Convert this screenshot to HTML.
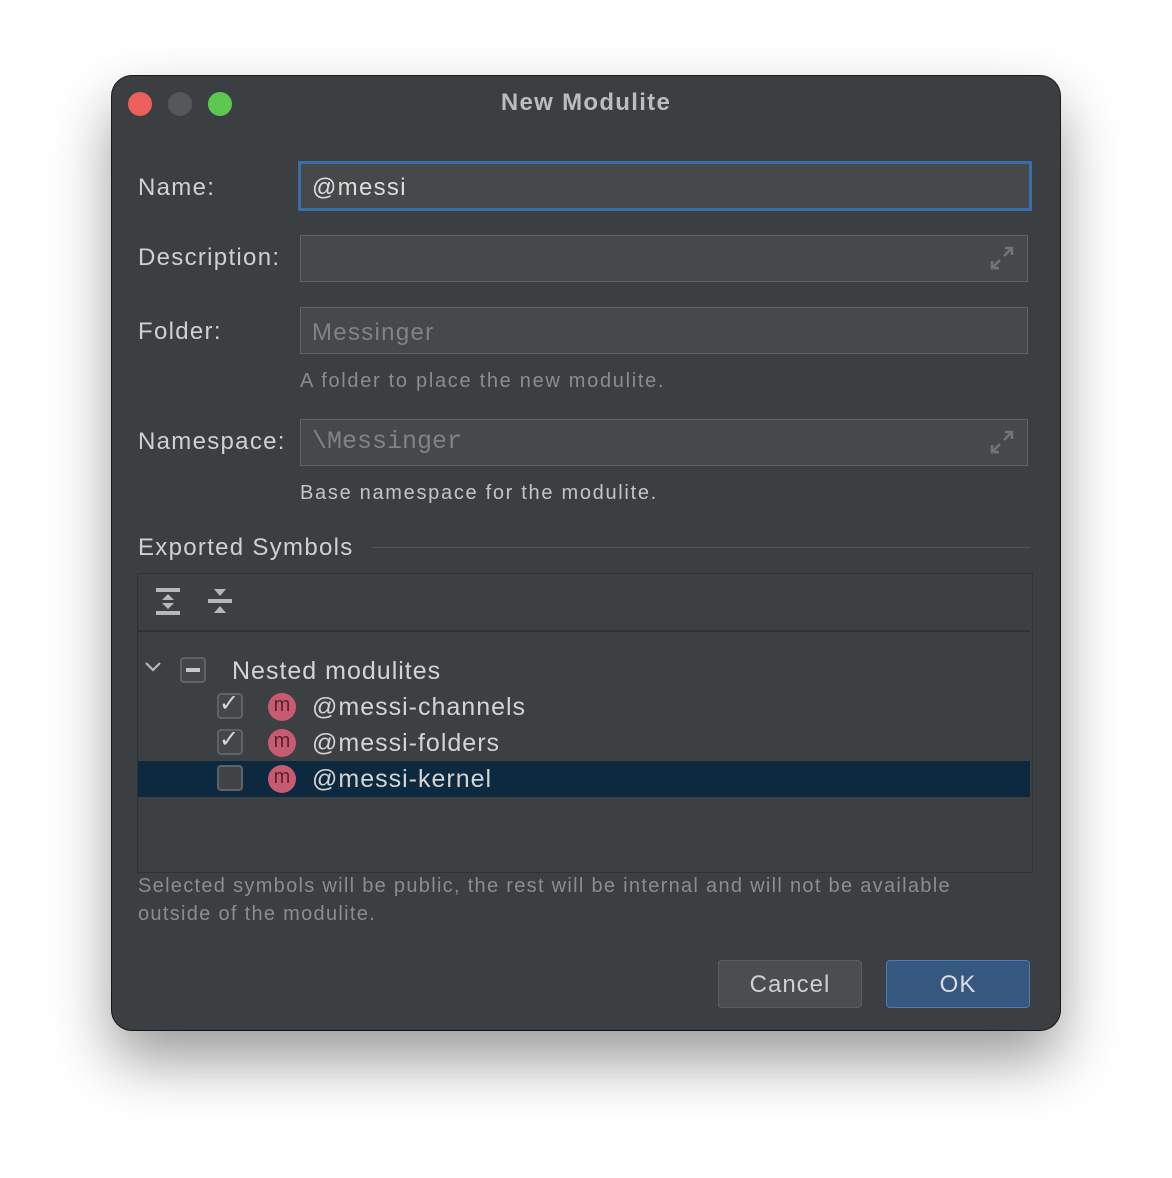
<!DOCTYPE html>
<html><head><style>
body{margin:0;width:1172px;height:1178px;background:#fff;font-family:"Liberation Sans",sans-serif;position:relative;overflow:hidden}
.win{position:absolute;left:112px;top:76px;width:948px;height:954px;background:#3c3f41;border-radius:20px;box-shadow:0 30px 60px rgba(0,0,0,.4),0 0 0 1px #1e1e1e;}
.a{position:absolute;white-space:nowrap}
.lbl{font-size:24px;color:#d0d0d0;letter-spacing:1.3px}
.fld{position:absolute;left:300px;width:728px;height:45px;border:1px solid #646464;background:#45494a;box-sizing:border-box}
.hint{font-size:20px;color:#8c8c8c;letter-spacing:1.7px}
.dot{position:absolute;top:92px;width:24px;height:24px;border-radius:50%}
.cb{position:absolute;width:26px;height:26px;border:2px solid #5e6264;border-radius:4px;box-sizing:border-box;background:#43474a}
.m{position:absolute;width:28px;height:28px;border-radius:50%;background:#c75b72;color:#5a2230;font-size:20px;text-align:center;line-height:24px}
.row{font-size:25px;color:#d4d4d4;letter-spacing:1px}
</style></head><body>
<div class="win"></div>
<div class="dot" style="left:128px;background:#ec5f5a"></div>
<div class="dot" style="left:168px;background:#555759"></div>
<div class="dot" style="left:208px;background:#5dc84f"></div>
<div class="a" style="left:0;width:1172px;text-align:center;top:89px;font-size:24px;font-weight:bold;color:#bcbcbc;letter-spacing:1.3px">New Modulite</div>

<div class="a lbl" style="left:138px;top:174px">Name:</div>
<div class="fld" style="top:161px;left:298px;width:734px;height:50px;border:3px solid #3b6ea8;background:#45494a"></div>
<div class="a lbl" style="left:312px;top:174px;color:#dcdcdc">@messi</div>

<div class="a lbl" style="left:138px;top:244px">Description:</div>
<div class="fld" style="top:235px;height:47px"></div>
<svg class="a" style="left:988px;top:244px" width="28" height="28" viewBox="0 0 28 28" fill="none" stroke="#6f7476" stroke-width="2.5"><path d="M16 12l8-8M17 4h7v7M12 16l-8 8M4 17v7h7"/></svg>

<div class="a lbl" style="left:138px;top:318px">Folder:</div>
<div class="fld" style="top:307px;height:47px"></div>
<div class="a lbl" style="left:312px;top:319px;color:#7f8385">Messinger</div>
<div class="a hint" style="left:300px;top:370px">A folder to place the new modulite.</div>

<div class="a lbl" style="left:138px;top:428px">Namespace:</div>
<div class="fld" style="top:419px;height:47px"></div>
<div class="a" style="left:312px;top:427px;font-family:'Liberation Mono',monospace;font-size:25px;color:#7f8385">\Messinger</div>
<svg class="a" style="left:988px;top:428px" width="28" height="28" viewBox="0 0 28 28" fill="none" stroke="#6f7476" stroke-width="2.5"><path d="M16 12l8-8M17 4h7v7M12 16l-8 8M4 17v7h7"/></svg>
<div class="a hint" style="left:300px;top:482px;color:#c4c4c4">Base namespace for the modulite.</div>

<div class="a lbl" style="left:138px;top:534px">Exported Symbols</div>
<div class="a" style="left:372px;top:547px;width:658px;height:1px;background:#515557"></div>

<div class="a" style="left:137px;top:573px;width:894px;height:298px;border:1px solid #2f3133;background:#3d4043"></div>
<div class="a" style="left:138px;top:630px;width:892px;height:2px;background:#2f3133"></div>
<svg class="a" style="left:154px;top:587px" width="28" height="30" viewBox="0 0 28 30" fill="#b5b8ba"><rect x="2" y="1" width="24" height="4"/><rect x="2" y="24" width="24" height="4"/><path d="M8 13l6-6 6 6zM8 16h12l-6 6z"/></svg>
<svg class="a" style="left:206px;top:587px" width="28" height="30" viewBox="0 0 28 30" fill="#b5b8ba"><path d="M8 2h12l-6 7zM2 12h24v4H2zM14 19l6 7H8z"/></svg>

<svg class="a" style="left:144px;top:660px" width="18" height="14" viewBox="0 0 18 14" fill="none" stroke="#b8b8b8" stroke-width="2.2"><path d="M2 3l7 7 7-7"/></svg>
<div class="cb" style="left:180px;top:657px"></div>
<div class="a" style="left:186px;top:668px;width:14px;height:4px;background:#c8c8c8"></div>
<div class="a row" style="left:232px;top:657px">Nested modulites</div>

<div class="cb" style="left:217px;top:693px"></div>
<div class="a" style="left:219px;top:689px;font-size:24px;color:#d6d6d6">✓</div>
<div class="m" style="left:268px;top:693px">m</div>
<div class="a row" style="left:312px;top:693px">@messi-channels</div>

<div class="cb" style="left:217px;top:729px"></div>
<div class="a" style="left:219px;top:725px;font-size:24px;color:#d6d6d6">✓</div>
<div class="m" style="left:268px;top:729px">m</div>
<div class="a row" style="left:312px;top:729px">@messi-folders</div>

<div class="a" style="left:138px;top:761px;width:892px;height:36px;background:#0d293f"></div>
<div class="cb" style="left:217px;top:765px;background:#3f4345"></div>
<div class="m" style="left:268px;top:765px">m</div>
<div class="a row" style="left:312px;top:765px">@messi-kernel</div>

<div class="a hint" style="left:138px;top:872px;line-height:28px;white-space:normal;width:850px;letter-spacing:1.3px">Selected symbols will be public, the rest will be internal and will not be available outside of the modulite.</div>

<div class="a" style="left:718px;top:960px;width:144px;height:48px;box-sizing:border-box;border:1px solid #5b5f61;border-radius:4px;background:#4a4e50;color:#cfcfcf;font-size:24px;text-align:center;line-height:48px;letter-spacing:1px">Cancel</div>
<div class="a" style="left:886px;top:960px;width:144px;height:48px;box-sizing:border-box;border:1px solid #4a7bb3;border-radius:4px;background:#365880;color:#dcdcdc;font-size:24px;text-align:center;line-height:48px;letter-spacing:1px">OK</div>
</body></html>
